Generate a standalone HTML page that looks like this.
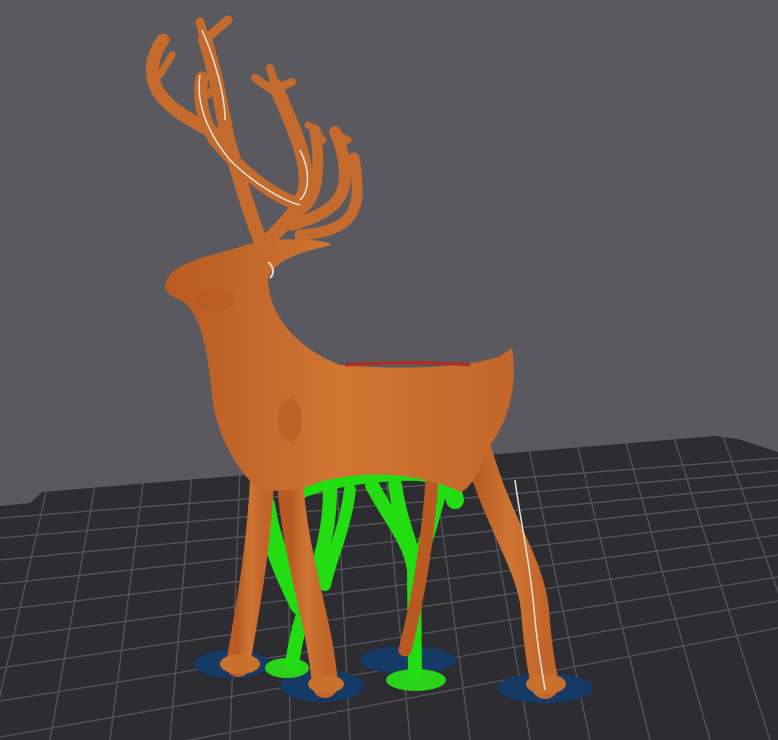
<!DOCTYPE html>
<html><head><style>
html,body{margin:0;padding:0;background:#59595f;width:778px;height:740px;overflow:hidden}
svg{display:block}
</style></head><body>
<svg width="778" height="740" viewBox="0 0 778 740" xmlns="http://www.w3.org/2000/svg">
<defs>
<clipPath id="bed"><path d="M0,506 L30,503 L42,492 L715,436 L738,439 L778,452 L778,740 L0,740 Z"/></clipPath>
<linearGradient id="og" x1="0" y1="0" x2="1" y2="0">
<stop offset="0" stop-color="#b85a22"/><stop offset="0.5" stop-color="#cf7634"/><stop offset="1" stop-color="#c2652a"/>
</linearGradient>
</defs>
<path d="M0,506 L30,503 L42,492 L715,436 L738,439 L778,452 L778,740 L0,740 Z" fill="#2c2c31"/>
<g clip-path="url(#bed)" stroke="#55555c" stroke-width="1.3" fill="none">
<path d="M0,518 L778,458 M0,538 L778,471 M0,560 L778,485 M0,584 L778,500 M0,610 L778,517 M0,638 L778,535 M0,668 L778,555 M0,701 L778,577 M0,737 L778,601 M0,776 L778,628"/>
<path d="M0,482 L-60,740 M48,484 L-10,740 M96,480 L50,740 M144,476 L110,740 M192,472 L170,740 M240,468 L230,740 M288,464 L290,740 M336,460 L350,740 M384,456 L410,740 M432,452 L470,740 M480,448 L530,740 M528,444 L590,740 M576,440 L650,740 M624,436 L710,740 M672,432 L770,740 M720,428 L830,740"/>
</g>
<!-- base discs -->
<ellipse cx="232" cy="664" rx="38" ry="14" fill="#163a66"/>
<ellipse cx="322" cy="686" rx="42" ry="16" fill="#163a66"/>
<ellipse cx="408" cy="660" rx="48" ry="14" fill="#163a66"/>
<ellipse cx="545" cy="688" rx="48" ry="15" fill="#163a66"/>
<ellipse cx="287" cy="668" rx="22" ry="10" fill="#2bd21a"/>
<ellipse cx="416" cy="680" rx="30" ry="11" fill="#2bd21a"/>
<!-- green supports -->
<g stroke="#22dd11" fill="none" stroke-linecap="round">
<path d="M300,490 C320,480 380,470 420,472 C440,474 452,485 455,500" stroke-width="18"/>
<path d="M265,505 C270,540 285,575 300,605" stroke-width="20"/>
<path d="M330,490 C330,560 300,600 292,665" stroke-width="14"/>
<path d="M372,485 C390,520 410,540 414,570 L415,675" stroke-width="14"/>
<path d="M440,490 C430,530 418,560 414,590" stroke-width="14"/>
<path d="M350,490 C345,530 330,560 325,585" stroke-width="12"/>
<path d="M395,485 C400,520 410,540 414,560" stroke-width="14"/>
</g>
<!-- hidden back leg -->
<path d="M432,480 C428,540 418,600 405,650" stroke="#b85a22" stroke-width="13" fill="none" stroke-linecap="round"/>
<!-- legs -->
<g stroke="url(#og)" fill="none" stroke-linecap="round">
<path d="M262,480 C258,560 245,620 238,665" stroke-width="24"/>
<path d="M290,480 C295,560 320,620 325,685" stroke-width="26"/>
<path d="M475,440 C495,520 530,560 535,610 C538,650 542,670 545,685" stroke-width="28"/>
</g>
<ellipse cx="240" cy="664" rx="20" ry="10" fill="#c8702c"/>
<ellipse cx="326" cy="684" rx="18" ry="9" fill="#c8702c"/>
<ellipse cx="546" cy="684" rx="20" ry="10" fill="#c8702c"/>
<!-- body -->
<path d="M165,285 C168,270 185,262 215,254 C240,248 255,240 275,240 C300,238 325,240 332,245 C300,252 275,260 268,278 C268,310 290,345 340,365 C400,370 470,368 500,356 L512,348 C518,380 510,420 490,445 C480,470 470,490 460,492 C420,472 360,470 320,482 C300,490 280,492 260,490 C235,470 215,430 212,395 C208,350 200,310 180,300 C170,296 165,292 165,285 Z" fill="url(#og)"/>
<path d="M268,262 C272,265 276,272 270,278" stroke="#e8d8c0" stroke-width="2" fill="none"/>
<path d="M345,365 C380,362 440,362 470,365" stroke="#b82a20" stroke-width="3" fill="none"/>
<ellipse cx="290" cy="420" rx="12" ry="22" fill="#b85a22" opacity="0.6"/>
<ellipse cx="215" cy="300" rx="20" ry="12" fill="#b85a22" opacity="0.5"/>
<!-- antlers -->
<g stroke="#c46a2c" fill="none" stroke-linecap="round">
<path d="M262,245 C250,215 240,180 228,140 C222,110 215,70 205,40" stroke-width="14"/>
<path d="M205,40 L200,22 M207,38 L228,20" stroke-width="9"/>
<path d="M228,140 C200,125 165,110 155,85 C150,70 152,55 163,40" stroke-width="13"/>
<path d="M160,75 L172,55" stroke-width="7"/>
<path d="M300,205 C270,195 240,170 215,140 C203,120 198,100 202,78" stroke-width="13"/>
<path d="M208,95 L212,90" stroke-width="7"/>
<path d="M268,240 C290,220 300,205 305,190 C310,160 290,120 275,85" stroke-width="14"/>
<path d="M275,85 L270,68 M278,88 L292,82 M272,90 L255,78" stroke-width="8"/>
<path d="M300,210 C320,200 320,160 315,130" stroke-width="11"/>
<path d="M316,132 L323,140 M313,128 L308,125" stroke-width="7"/>
<path d="M290,225 C330,215 345,200 345,175 C345,160 340,140 335,132" stroke-width="12"/>
<path d="M338,135 L348,140" stroke-width="7"/>
<path d="M300,235 C340,232 355,220 357,195 C358,180 355,165 354,158" stroke-width="11"/>
</g>
<g stroke="#e8e4dc" fill="none" stroke-width="1.5">
<path d="M200,75 C196,100 205,130 230,160 C250,180 280,200 300,205"/>
<path d="M202,30 C215,60 225,95 225,120"/>
<path d="M300,150 C310,170 310,190 300,200"/>
<path d="M515,480 C520,520 530,560 535,620 C538,650 542,670 545,690"/>
</g>
</svg>
</body></html>
